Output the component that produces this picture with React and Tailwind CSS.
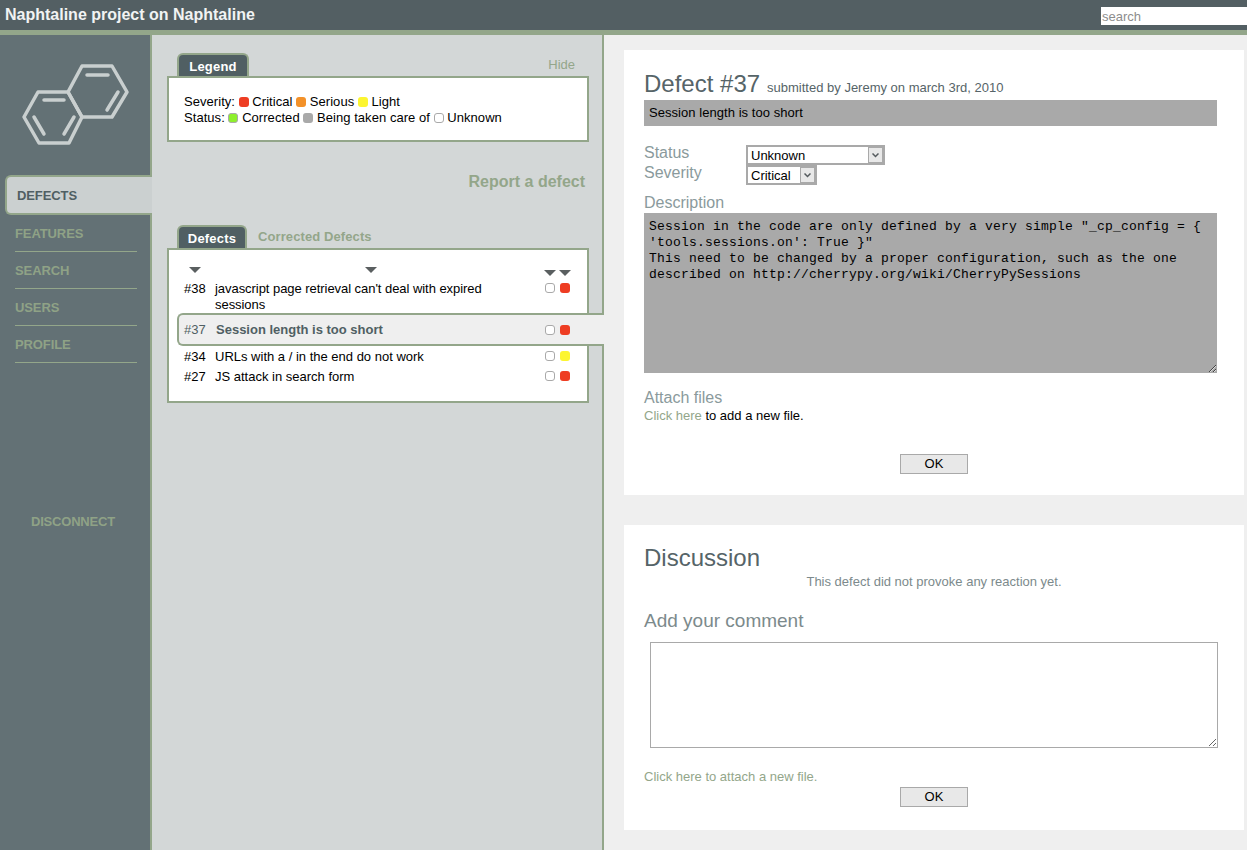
import React from "react";

const Dot = ({ c }) => {
  const cls = {
    red: "bg-[#ee3d23]",
    orange: "bg-[#f39129]",
    yellow: "bg-[#fcf530]",
    green: "bg-[#8ef02c] border border-[#a9a9a9]",
    gray: "bg-[#a9a9a9]",
    none: "bg-white border border-[#a9a9a9]",
  }[c];
  return <span className={`inline-block w-[10px] h-[10px] rounded-[3px] align-[-1px] box-border ${cls}`} />;
};

const Arrow = ({ className = "" }) => (
  <span className={`inline-block shrink-0 w-0 h-0 border-x-[6px] border-x-transparent border-t-[6px] border-t-[#5a5f60] ${className}`} />
);

const Logo = () => (
  <svg width="150" height="140" viewBox="0 35 150 140" fill="none" stroke="#c9cfcf" strokeWidth="3.5" strokeLinejoin="round" strokeLinecap="round" className="block">
    <path d="M82 66H112L127 92L112 117H82L68 92Z" />
    <path d="M38 92H68L82 117L69 143H39L24 117Z" />
    <path d="M87 75H108M107 110L118 92M44 100H64M34 117L44 134M64 134L74 117" />
  </svg>
);

const NavItem = ({ label }) => (
  <div className="ml-[15px] w-[122px] h-[37px] border-b border-[#93a68a] flex items-center text-[13px] tracking-[-0.1px] font-bold text-[#8fa286] pt-[1px]">
    {label}
  </div>
);

const Tab = ({ label, w }) => (
  <div className={`ml-[10px] ${w} h-[23px] rounded-t-[6px] border-[2px] border-b-0 border-[#93a68a] bg-[#505f63] text-white font-bold text-[13px] tracking-[0.2px] flex items-center justify-center pt-[2px]`}>
    {label}
  </div>
);

const Row = ({ id, title, sev, cls = "", textCls = "pt-[1px]", titleCls = "" }) => (
  <div className={`flex ${cls}`}>
    <span className={`w-[31px] shrink-0 ${textCls}`}>{id}</span>
    <span className={`w-[300px] shrink-0 ${textCls} ${titleCls}`}>{title}</span>
    <span className="ml-auto flex gap-[5px] items-start pt-[3px] pr-[17px]">
      <Dot c="none" />
      <Dot c={sev} />
    </span>
  </div>
);

const FakeSelect = ({ label, w }) => (
  <div className={`${w} h-[20px] border-[2px] border-[#a9a9a9] border-r-[1px] bg-white flex justify-between text-[13px] text-black box-border`}>
    <span className="pl-[3px] leading-[18px]">{label}</span>
    <span className="w-[16px] bg-[#e8e8e8] border border-[#a9a9a9] border-r-[2px] flex items-center justify-center">
      <svg width="7" height="5" viewBox="0 0 7 5" fill="none" stroke="#555b5e" strokeWidth="1.5"><path d="M0.5 0.5L3.5 3.5L6.5 0.5" /></svg>
    </span>
  </div>
);

export default function App() {
  return (
    <div className="w-[1247px] h-[850px] overflow-hidden flex flex-col font-['Liberation_Sans',Arial,sans-serif] text-[13px] text-black bg-[#efefef]">
      <header className="h-[35px] shrink-0 bg-[#535f63] border-b-[5px] border-[#93a68a] flex justify-between items-center">
        <div className="pl-[5px] text-[16px] font-bold text-[#f1f3f3] leading-[30px]">Naphtaline project on Naphtaline</div>
        <input
          placeholder="search"
          className="w-[146px] h-[18px] mt-[2px] pt-[1px] bg-white text-[13px] pl-[1px] outline-none placeholder:text-[#8d8d8d]"
        />
      </header>

      <div className="flex flex-1 min-h-0">
        <aside className="w-[152px] shrink-0 bg-[#637175] border-r-[2px] border-[#93a68a] flex flex-col">
          <Logo />
          <div className="ml-[5px] -mr-[2px] h-[40px] pt-[1px] rounded-l-[6px] border-[2px] border-r-0 border-[#93a68a] bg-[#cbd0d0] flex items-center pl-[10px] text-[13px] tracking-[-0.1px] font-bold text-[#505f63] relative">
            DEFECTS
          </div>
          <NavItem label="FEATURES" />
          <NavItem label="SEARCH" />
          <NavItem label="USERS" />
          <NavItem label="PROFILE" />
          <div className="mt-[151px] pl-[31px] text-[13px] tracking-[-0.2px] font-bold text-[#8fa286] leading-[16px]">DISCONNECT</div>
        </aside>

        <main className="w-[452px] shrink-0 bg-[#d3d7d7] border-r-[2px] border-[#93a68a] pl-[15px] pt-[18px]">
          <div className="w-[422px] flex justify-between items-end">
            <Tab label="Legend" w="w-[72px]" />
            <span className="mr-[14px] mb-[2px] text-[13px] text-[#93a68a]">Hide</span>
          </div>
          <div className="w-[422px] h-[66px] border-[2px] border-[#93a68a] bg-white pl-[15px] pt-[16px] leading-[16px] tracking-[0.05px]">
            <div>Severity: <Dot c="red" /> Critical <Dot c="orange" /> Serious <Dot c="yellow" /> Light</div>
            <div>Status: <Dot c="green" /> Corrected <Dot c="gray" /> Being taken care of <Dot c="none" /> Unknown</div>
          </div>
          <div className="w-[418px] mt-[30px] text-right text-[16px] font-bold text-[#93a68a] leading-[20px]">Report a defect</div>

          <div className="w-[422px] mt-[33px] flex items-end">
            <Tab label="Defects" w="w-[70px]" />
            <span className="ml-[11px] mb-[2px] text-[13px] tracking-[0.1px] font-bold text-[#93a68a]">Corrected Defects</span>
          </div>
          <div className="w-[422px] h-[155px] border-[2px] border-[#93a68a] bg-white pt-[17px] leading-[16px]">
            <div className="h-[13px] flex items-start pl-[20px]">
              <Arrow />
              <Arrow className="ml-[164px]" />
              <Arrow className="ml-[167px] mt-[3px]" />
              <Arrow className="ml-[3px] mt-[3px]" />
            </div>
            <Row cls="pl-[15px]" id="#38" title="javascript page retrieval can't deal with expired sessions" sev="red" titleCls="tracking-[-0.05px]" />
            <div className="w-[427px] h-[33px] ml-[8px] rounded-l-[6px] border-[2px] border-r-0 border-[#93a68a] bg-[#efefef] text-[#505f63] relative z-10 flex items-center">
              <div className="flex-1 pl-[5px]">
                <Row id="#37" title="Session length is too short" sev="red" cls="pr-[17px]" textCls="" titleCls="font-bold pl-[1px]" />
              </div>
            </div>
            <Row cls="pl-[15px] mt-[2px]" id="#34" title="URLs with a / in the end do not work" sev="yellow" />
            <Row cls="pl-[15px] mt-[3px]" id="#27" title="JS attack in search form" sev="red" />
          </div>
        </main>

        <section className="flex-1 pl-[20px] pr-[3px] pt-[15px]">
          <div className="h-[445px] bg-white px-[20px] pt-[18px]">
            <div className="flex items-baseline gap-[7px] h-[32px] text-[#566468]">
              <span className="text-[24px] leading-[32px]">Defect #37</span>
              <span className="text-[13px]">submitted by Jeremy on march 3rd, 2010</span>
            </div>
            <div className="w-[573px] h-[26px] bg-[#a9a9a9] pl-[5px] leading-[26px] tracking-[0.05px]">Session length is too short</div>
            <div className="mt-[17px] flex">
              <div className="w-[102px] text-[16px] leading-[20px] text-[#8a9a9c]">
                <div>Status</div>
                <div>Severity</div>
              </div>
              <div className="flex flex-col mt-[2px]">
                <FakeSelect label="Unknown" w="w-[139px]" />
                <FakeSelect label="Critical" w="w-[71px]" />
              </div>
            </div>
            <div className="mt-[8px] text-[16px] leading-[20px] text-[#8a9a9c]">Description</div>
            <textarea
              readOnly
              defaultValue={"Session in the code are only defined by a very simple \"_cp_config = { 'tools.sessions.on': True }\"\nThis need to be changed by a proper configuration, such as the one described on http://cherrypy.org/wiki/CherryPySessions"}
              className="block w-[573px] h-[160px] bg-[#a9a9a9] px-[5px] pt-[6px] font-['Liberation_Mono',monospace] text-[13px] leading-[16px] outline-none tracking-[0.2px]"
            />
            <div className="mt-[15px] text-[16px] leading-[20px] text-[#8a9a9c]">Attach files</div>
            <div className="leading-[16px]"><span className="text-[#93a68a]">Click here</span> to add a new file.</div>
            <div className="mt-[30px] flex justify-center">
              <button className="w-[68px] h-[20px] border border-[#a9a9a9] bg-[#e8e8e8] text-[13px] leading-[18px]">OK</button>
            </div>
          </div>

          <div className="mt-[30px] h-[305px] bg-white px-[20px] pt-[18px]">
            <div className="text-[24px] leading-[30px] text-[#566468]">Discussion</div>
            <div className="text-center leading-[16px] text-[#7c8a8c] mt-[1px]">This defect did not provoke any reaction yet.</div>
            <div className="mt-[20px] text-[19px] leading-[22px] text-[#7c8a8c]">Add your comment</div>
            <textarea
              readOnly
              className="block mt-[10px] ml-[6px] w-[568px] h-[106px] bg-white border border-[#a9a9a9] outline-none"
            />
            <div className="mt-[21px] leading-[16px] text-[#93a68a]">Click here to attach a new file.</div>
            <div className="mt-[2px] flex justify-center">
              <button className="w-[68px] h-[20px] border border-[#a9a9a9] bg-[#e8e8e8] text-[13px] leading-[18px]">OK</button>
            </div>
          </div>
        </section>
      </div>
    </div>
  );
}
